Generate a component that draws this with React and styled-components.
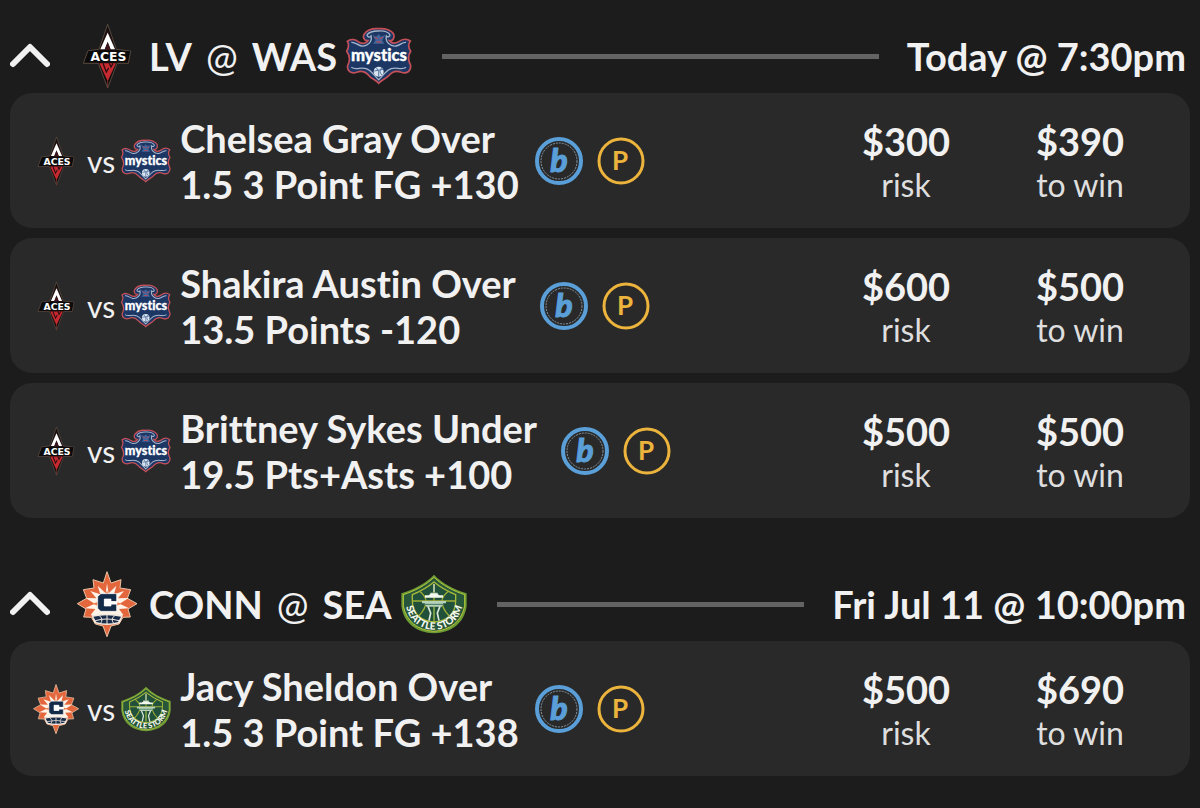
import { useState } from "react";
import styled, { createGlobalStyle } from "styled-components";

const GlobalStyle = createGlobalStyle`
  * {
    box-sizing: border-box;
  }

  body {
    margin: 0;
    background-color: #1c1c1c;
    color: #f1f1f1;
    font-family: Lato, "Liberation Sans", sans-serif;
    font-variant-ligatures: none;
  }
`;

const Page = styled.main`
  display: flex;
  flex-direction: column;
  gap: 49px;
  padding: 19px 10px 32px;
`;

const GameHeader = styled.header`
  display: flex;
  align-items: center;
  height: 74px;
  padding-right: 4px;
`;

const ToggleButton = styled.button`
  display: flex;
  width: 40px;
  margin-right: 24px;
  padding: 0;
  border: 0;
  background: none;
  color: inherit;
  cursor: pointer;

  svg {
    width: 40px;
    height: 28px;
    transform: ${(props) => (props.$open ? "none" : "rotate(180deg)")};
  }
`;

const Matchup = styled.h2`
  display: flex;
  align-items: center;
  gap: 9px;
  margin: 0;
  font-size: 38px;
  font-weight: 700;
  line-height: 46px;
`;

const TeamNames = styled.span`
  display: flex;
  gap: 14px;
`;

const AtSign = styled.span`
  font-weight: 400;
`;

const Divider = styled.div`
  flex: 1;
  height: 5px;
  margin: 0 28px 0 30px;
  background-color: #636363;
`;

const GameTime = styled.time`
  font-size: 38px;
  font-weight: 700;
  line-height: 46px;
`;

const BetList = styled.ul`
  display: flex;
  flex-direction: column;
  gap: 10px;
  margin: 0;
  padding: 0;
  list-style: none;
`;

const BetCard = styled.li`
  display: flex;
  align-items: center;
  min-height: 135px;
  padding: 0 23px 0 21px;
  border-radius: 22px;
  background-color: #292929;
`;

const BetTeams = styled.div`
  display: flex;
  align-items: center;
  gap: 6px;
  margin-right: 9px;
  font-size: 30px;
  line-height: 36px;
`;

const BetTitle = styled.h3`
  margin: 0;
  font-size: 38px;
  font-weight: 700;
  line-height: 46px;
  white-space: pre;
`;

const Badges = styled.div`
  display: flex;
  flex: 1;
  gap: 14px;
  margin-left: 16px;

  svg {
    width: 48px;
    height: 48px;
  }
`;

const Amount = styled.div`
  display: flex;
  flex-direction: column;
  align-items: center;
  width: 174px;
`;

const AmountValue = styled.span`
  font-size: 38px;
  font-weight: 700;
  line-height: 48px;
`;

const AmountLabel = styled.span`
  color: #dedede;
  font-size: 32px;
  line-height: 40px;
`;

const LogoSvg = styled.svg`
  flex: none;
  width: ${(props) => (props.$small ? 50 : 66)}px;
  height: ${(props) => (props.$small ? 50 : 66)}px;
`;

function AcesLogo({ small }) {
  return (
    <LogoSvg $small={small} viewBox="223 37 198 198" role="img" aria-label="Aces">
      <path
        d="M324 41 L350 116 L393 121 L386 158 L352 158 L324 232 L296 158 L251 158 L265 120 L298 116 Z"
        fill="#120c0b"
        stroke="#766052"
        strokeWidth="2"
      />
      <path d="M324 58 L349 117 H299 Z" fill="#2c1719" />
      <path d="M324 66 L346 116 H333 L324 93 L315 116 H302 Z" fill="#fff" />
      <path d="M324 95 L333 118 H315 Z" fill="#3c141c" />
      <path d="M299 158 H349 L324 212 Z" fill="#c62a31" />
      <path d="M310 158 L320 184 L327 172 M329 158 L334 169 L340 158" fill="none" stroke="#2a0d10" strokeWidth="4" />
      <path d="M324 211 V230" stroke="#6f3430" strokeWidth="3" />
      <path d="M267 121 H391 L383 154 H256 Z" fill="#0b0b0b" />
      <text
        x="326"
        y="151"
        fill="#fff"
        fontFamily="DejaVu Sans"
        fontSize="37"
        fontWeight="700"
        textAnchor="middle"
      >
        ACES
      </text>
    </LogoSvg>
  );
}

function MysticsLogo({ small }) {
  return (
    <LogoSvg $small={small} viewBox="55 21 198 198" role="img" aria-label="Mystics">
      <path
        d="M153 38 C172 36 193 43 198 55 C202 67 193 77 185 74 C190 83 203 84 213 77 C226 67 240 69 248 75 C239 88 244 99 249 106 C241 118 240 132 249 149 C250 165 237 175 221 169 C207 163 193 167 183 179 C173 190 163 190 153 202 C143 190 133 190 124 179 C113 167 99 164 87 169 C70 175 57 164 60 149 C68 134 67 119 57 106 C63 96 66 88 59 76 C69 67 84 70 93 78 C104 85 117 82 121 74 C109 75 104 63 110 54 C118 42 137 37 153 38 Z"
        fill="#1d3765"
        stroke="#c65059"
        strokeWidth="5"
      />
      <path
        d="M153 45 C170 43 184 49 187 57 C187 63 179 64 176 60 C172 77 187 92 205 90 C220 87 223 78 235 79 M153 45 C137 44 121 50 118 57 C119 64 127 65 130 60 C135 77 119 92 102 90 C87 87 84 78 71 79 M71 154 C87 166 105 147 125 163 C136 172 143 181 153 191 C163 181 170 172 181 163 C201 147 219 166 235 154"
        fill="none"
        stroke="#a5b5cb"
        strokeWidth="4"
      />
      <path d="M134 56 L145 62 L153 55 L161 62 L173 56 L164 73 L170 83 H136 L143 73 Z" fill="#3e659c" />
      <path d="M141 63 L151 69 M166 63 L156 69 M146 78 H161" stroke="#a94d61" strokeWidth="4" />
      <circle cx="153" cy="167" r="15" fill="#d9e4ee" />
      <path d="M140 165 L166 160 M146 155 Q157 167 153 181 M163 155 Q151 165 163 178" fill="none" stroke="#5274a1" strokeWidth="3" />
      <text
        x="154"
        y="136"
        fill="#fff"
        stroke="#fff"
        strokeWidth="1"
        fontFamily="Lato"
        fontSize="50"
        fontWeight="900"
        textAnchor="middle"
      >
        mystics
      </text>
    </LogoSvg>
  );
}

function SunLogo({ small }) {
  return (
    <LogoSvg $small={small} viewBox="222 31 198 198" role="img" aria-label="Sun">
      <path
        d="M321 33 L333 67 L363 57 L360 82 L392 87 L382 113 L411 129 L384 145 L391 169 L369 170 L357 190 L333 196 L321 228 L309 196 L286 190 L274 170 L251 169 L258 145 L232 129 L260 113 L250 87 L282 82 L279 57 L310 67 Z"
        fill="#e4663c"
        stroke="#e8c3a4"
        strokeWidth="3"
      />
      <path
        d="M321 68 L326 98 L349 75 L342 101 L372 91 L354 113 L386 112 L359 129 L387 143 L357 145 L370 163 H272 L286 145 L255 143 L284 129 L257 112 L289 113 L271 91 L301 101 L293 75 L317 98 Z"
        fill="#fff3e7"
      />
      <path d="M321 88 L329 113 H313 Z M276 129 L304 121 V138 Z M366 129 L338 121 V138 Z" fill="#ef7d4d" />
      <path d="M274 164 Q321 153 369 164 L359 188 Q321 198 284 188 Z" fill="#f2e9df" />
      <path d="M280 168 Q321 159 363 168 L354 184 Q321 193 289 184 Z" fill="#172b48" />
      <path
        d="M321 163 V190 M286 180 Q321 170 357 180 M298 165 Q311 176 302 188 M344 165 Q331 176 341 188"
        fill="none"
        stroke="#f2e9df"
        strokeWidth="3"
      />
      <path
        d="M302 99 H350 V123 H333 V115 H313 V136 H333 V130 H350 V152 H302 L293 143 V108 Z"
        fill="#142a49"
        stroke="#fff"
        strokeWidth="2"
      />
      <path d="M313 115 H333 V122 H352 V131 H333 V136 H313 Z" fill="#fff" />
    </LogoSvg>
  );
}

function StormLogo({ small }) {
  const arcId = small ? "storm-arc-small" : "storm-arc";
  return (
    <LogoSvg $small={small} viewBox="70 31 198 198" role="img" aria-label="Storm">
      <defs>
        <path id={arcId} d="M82 112 C84 239 254 239 256 112" />
      </defs>
      <path
        d="M169 42 C194 68 228 86 267 98 V136 C260 188 221 216 169 218 C117 216 78 188 71 136 V98 C110 86 144 68 169 42 Z"
        fill="#6c9a34"
      />
      <path
        d="M169 50 C194 74 227 91 261 102 V135 C253 181 218 209 169 212 C120 209 85 181 77 135 V102 C111 91 144 74 169 50 Z"
        fill="#28563b"
        stroke="#b6c93b"
        strokeWidth="3"
      />
      <path
        d="M169 64 C187 79 207 91 234 102 V120 C234 158 209 182 169 184 C129 182 104 158 104 120 V102 C131 91 151 79 169 64 Z"
        fill="#21503b"
        stroke="#a9bb38"
        strokeWidth="4"
      />
      <path
        d="M105 121 H233 M169 70 V184 M125 91 Q145 107 145 121 Q145 144 124 165 M213 91 Q193 107 193 121 Q193 144 214 165"
        fill="none"
        stroke="#9faf34"
        strokeWidth="4"
      />
      <path d="M169 70 V94 M158 98 H180" stroke="#c8d9cd" strokeWidth="4" />
      <path d="M153 104 L159 99 H179 L185 104 H196 V111 H142 V104 Z" fill="#f2f8ed" />
      <path d="M133 121 H205 V128 H197 L192 138 H146 L141 128 H133 Z" fill="#b7d1ba" />
      <path d="M139 131 H199" stroke="#3f7959" strokeWidth="3" />
      <path d="M151 137 L159 157 L154 180 M187 137 L179 157 L184 180" fill="none" stroke="#dce9db" strokeWidth="5" />
      <path d="M169 138 V177" stroke="#729a44" strokeWidth="6" />
      <text fill="#f6faef" fontFamily="Lato" fontSize="30" fontWeight="900">
        <textPath href={`#${arcId}`} startOffset="50%" textAnchor="middle">
          SEATTLE STORM
        </textPath>
      </text>
    </LogoSvg>
  );
}

function BBadge() {
  return (
    <svg viewBox="0 0 48 48" role="img" aria-label="b">
      <circle cx="24" cy="24" r="22" fill="none" stroke="#5a9fd8" strokeWidth="4" />
      <circle cx="24" cy="24" r="18" fill="none" stroke="#8796a2" strokeWidth="1" strokeDasharray="2 1" />
      <text
        x="24"
        y="35"
        fill="#5a9fd8"
        stroke="#5a9fd8"
        strokeWidth="1"
        fontFamily="Lato"
        fontSize="32"
        fontStyle="italic"
        fontWeight="900"
        textAnchor="middle"
      >
        b
      </text>
    </svg>
  );
}

function PBadge() {
  return (
    <svg viewBox="0 0 48 48" role="img" aria-label="P">
      <circle cx="24" cy="24" r="22" fill="none" stroke="#ecb43c" strokeWidth="3" />
      <text
        x="23"
        y="33"
        fill="#ecb43c"
        fontFamily="Lato"
        fontSize="26"
        fontWeight="700"
        textAnchor="middle"
      >
        P
      </text>
    </svg>
  );
}

const teams = {
  LV: AcesLogo,
  WAS: MysticsLogo,
  CONN: SunLogo,
  SEA: StormLogo,
};

const games = [
  {
    away: "LV",
    home: "WAS",
    time: "Today @ 7:30pm",
    bets: [
      { title: "Chelsea Gray Over \n1.5 3 Point FG +130", risk: "$300", win: "$390" },
      { title: "Shakira Austin Over \n13.5 Points -120", risk: "$600", win: "$500" },
      { title: "Brittney Sykes Under \n19.5 Pts+Asts +100", risk: "$500", win: "$500" },
    ],
  },
  {
    away: "CONN",
    home: "SEA",
    time: "Fri Jul 11 @ 10:00pm",
    bets: [{ title: "Jacy Sheldon Over \n1.5 3 Point FG +138", risk: "$500", win: "$690" }],
  },
];

function Bet({ bet, AwayLogo, HomeLogo }) {
  return (
    <BetCard>
      <BetTeams>
        <AwayLogo small />
        <span>vs</span>
        <HomeLogo small />
      </BetTeams>
      <BetTitle>{bet.title}</BetTitle>
      <Badges>
        <BBadge />
        <PBadge />
      </Badges>
      <Amount>
        <AmountValue>{bet.risk}</AmountValue>
        <AmountLabel>risk</AmountLabel>
      </Amount>
      <Amount>
        <AmountValue>{bet.win}</AmountValue>
        <AmountLabel>to win</AmountLabel>
      </Amount>
    </BetCard>
  );
}

function Game({ game }) {
  const [open, setOpen] = useState(true);
  const AwayLogo = teams[game.away];
  const HomeLogo = teams[game.home];

  return (
    <section>
      <GameHeader>
        <ToggleButton
          type="button"
          $open={open}
          aria-expanded={open}
          aria-label={`${game.away} @ ${game.home}`}
          onClick={() => setOpen(!open)}
        >
          <svg viewBox="0 0 40 28" fill="none" stroke="currentColor" strokeWidth="6" strokeLinecap="round" strokeLinejoin="round">
            <path d="M3 22 L20 5 L37 22" />
          </svg>
        </ToggleButton>
        <Matchup>
          <AwayLogo />
          <TeamNames>
            <span>{game.away}</span>
            <AtSign>@</AtSign>
            <span>{game.home}</span>
          </TeamNames>
          <HomeLogo />
        </Matchup>
        <Divider />
        <GameTime>{game.time}</GameTime>
      </GameHeader>
      {open && (
        <BetList>
          {game.bets.map((bet) => (
            <Bet key={bet.title} bet={bet} AwayLogo={AwayLogo} HomeLogo={HomeLogo} />
          ))}
        </BetList>
      )}
    </section>
  );
}

function App() {
  return (
    <>
      <GlobalStyle />
      <Page>
        {games.map((game) => (
          <Game key={game.time} game={game} />
        ))}
      </Page>
    </>
  );
}

export default App;
